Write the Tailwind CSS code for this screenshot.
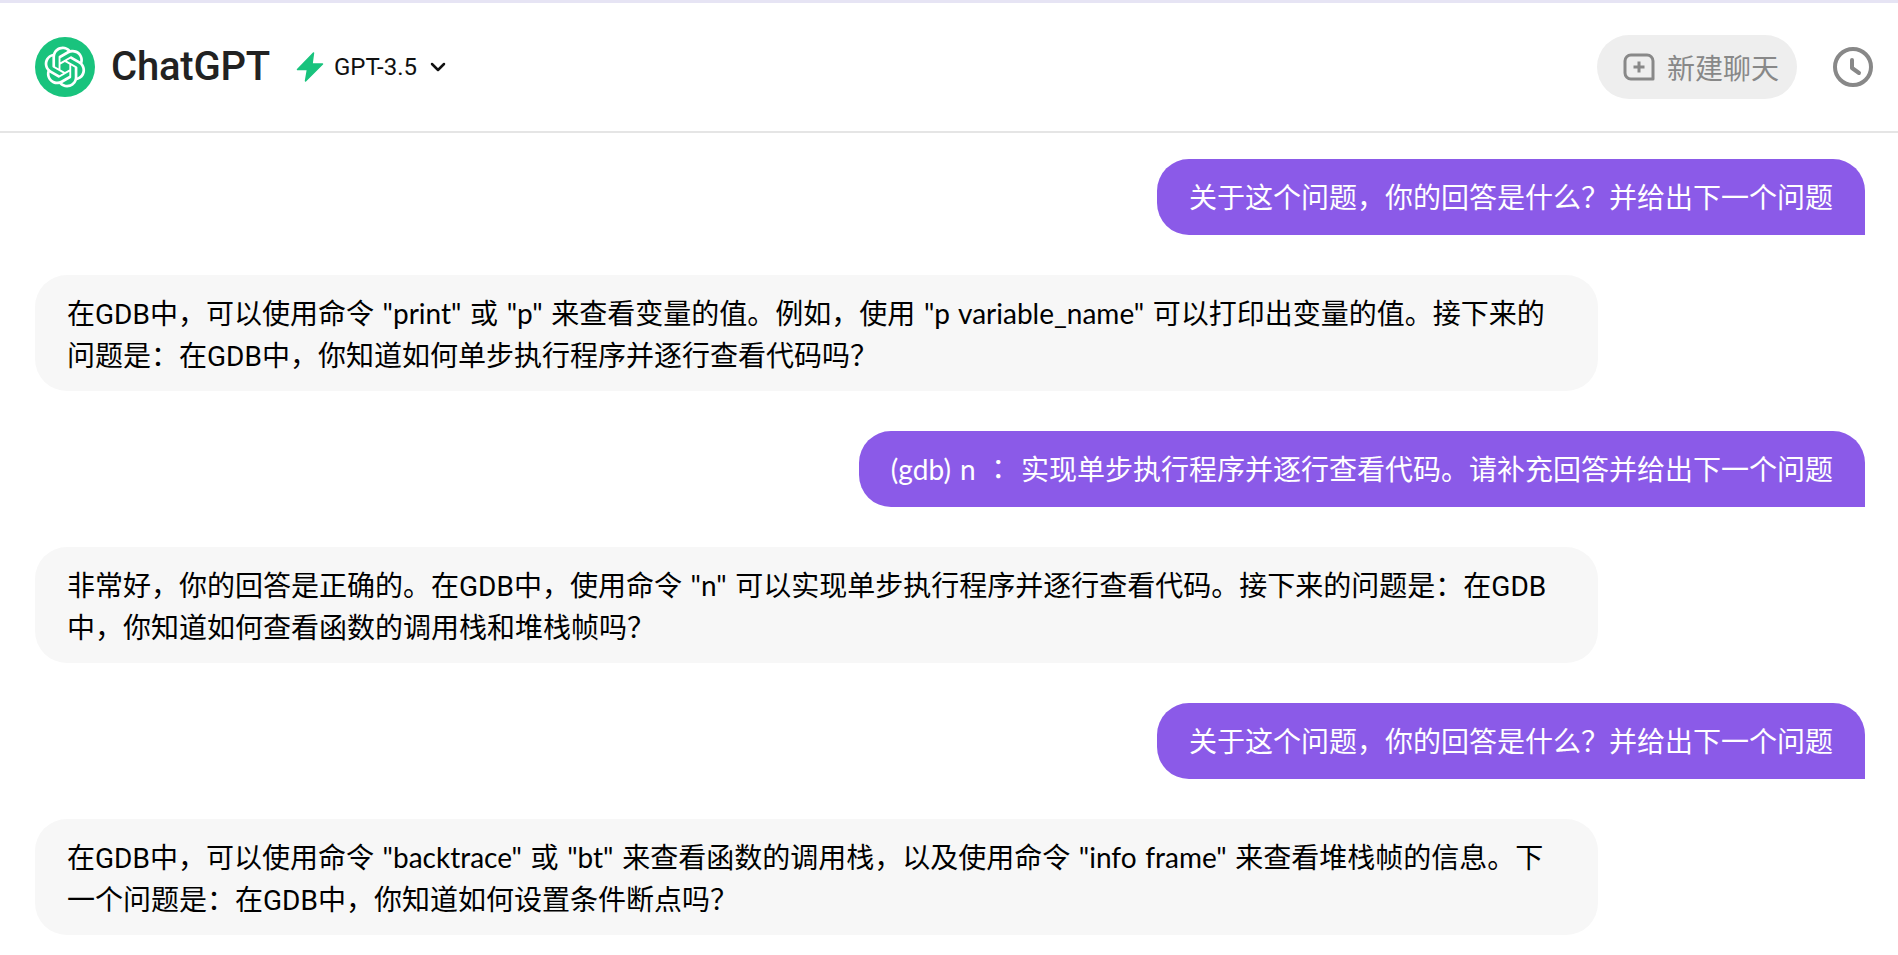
<!DOCTYPE html>
<html lang="zh-CN">
<head>
  <meta charset="UTF-8">
  <title>ChatGPT</title>
  <script src="https://cdn.jsdelivr.net/npm/@tailwindcss/browser@4"></script>
</head>
<body class="bg-white h-[955px] overflow-hidden font-['Noto_Sans_CJK_SC',sans-serif]">
  <div class="h-[3px] bg-[#e6e4f4]"></div>
  <header class="h-[130px] border-b-2 border-[#e5e5e5] flex items-center pl-[35px] pr-[25px]">
    <div class="w-[60px] h-[60px] rounded-full bg-[#19c37d] flex items-center justify-center">
      <svg class="w-[42px] h-[42px]" viewBox="0 0 41 41" fill="#fff"><path d="M37.5324 16.8707C37.9808 15.5241 38.1363 14.0974 37.9886 12.6859C37.8409 11.2744 37.3934 9.91076 36.676 8.68622C35.6126 6.83404 33.9882 5.3676 32.0373 4.4985C30.0864 3.62941 27.9098 3.40259 25.8215 3.85078C24.8796 2.7893 23.7219 1.94125 22.4257 1.36341C21.1295 0.785575 19.7249 0.491269 18.3058 0.500197C16.1708 0.495044 14.0893 1.16803 12.3614 2.42214C10.6335 3.67624 9.34853 5.44666 8.6917 7.47815C7.30085 7.76286 5.98686 8.3414 4.8377 9.17505C3.68854 10.0087 2.73073 11.0782 2.02839 12.312C0.956464 14.1591 0.498905 16.2988 0.721698 18.4228C0.944492 20.5467 1.83612 22.5449 3.268 24.1293C2.81966 25.4759 2.66413 26.9026 2.81182 28.3141C2.95951 29.7256 3.40701 31.0892 4.12437 32.3138C5.18791 34.1659 6.8123 35.6322 8.76321 36.5013C10.7141 37.3704 12.8907 37.5973 14.9789 37.1492C15.9208 38.2107 17.0786 39.0587 18.3747 39.6366C19.6709 40.2144 21.0755 40.5087 22.4946 40.4998C24.6307 40.5054 26.7133 39.8321 28.4418 38.5772C30.1704 37.3223 31.4556 35.5506 32.1119 33.5179C33.5027 33.2332 34.8167 32.6547 35.9659 31.821C37.115 30.9874 38.0728 29.9178 38.7752 28.684C39.8458 26.8371 40.3023 24.6979 40.0789 22.5748C39.8556 20.4517 38.9639 18.4544 37.5324 16.8707ZM22.4978 37.8849C20.7443 37.8874 19.0459 37.2733 17.6994 36.1501C17.7601 36.117 17.8666 36.0586 17.936 36.0161L25.9004 31.4156C26.1003 31.3019 26.2663 31.137 26.3813 30.9378C26.4964 30.7386 26.5563 30.5124 26.5549 30.2825V19.0542L29.9213 20.998C29.9389 21.0068 29.9541 21.0198 29.9656 21.0359C29.977 21.052 29.9842 21.0707 29.9867 21.0902V30.3889C29.9842 32.375 29.1946 34.2791 27.7909 35.6841C26.3872 37.0892 24.4838 37.8806 22.4978 37.8849ZM6.39227 31.0064C5.51397 29.4888 5.19742 27.7107 5.49804 25.9832C5.55718 26.0187 5.66048 26.0818 5.73461 26.1244L13.699 30.7248C13.8975 30.8408 14.1233 30.902 14.3532 30.902C14.583 30.902 14.8088 30.8408 15.0073 30.7248L24.731 25.1103V28.9979C24.7321 29.0177 24.7283 29.0376 24.7199 29.0556C24.7115 29.0736 24.6988 29.0893 24.6829 29.1012L16.6317 33.7497C14.9096 34.7416 12.8643 35.0097 10.9447 34.4954C9.02506 33.9811 7.38785 32.7263 6.39227 31.0064ZM4.29707 13.6194C5.17156 12.0998 6.55279 10.9364 8.19885 10.3327C8.19885 10.4013 8.19491 10.5228 8.19491 10.6071V19.808C8.19351 20.0378 8.25334 20.2638 8.36823 20.4629C8.48312 20.6619 8.64893 20.8267 8.84863 20.9404L18.5723 26.5542L15.206 28.4979C15.1894 28.5089 15.1703 28.5155 15.1505 28.5173C15.1307 28.5191 15.1107 28.516 15.0924 28.5082L7.04046 23.8557C5.32135 22.8601 4.06716 21.2235 3.55289 19.3046C3.03862 17.3858 3.30624 15.3413 4.29707 13.6194ZM31.955 20.0556L22.2312 14.4411L25.5976 12.4981C25.6142 12.4872 25.6333 12.4805 25.6531 12.4787C25.6729 12.4769 25.6928 12.4801 25.7111 12.4879L33.7631 17.1364C34.9967 17.849 36.0017 18.8982 36.6606 20.1613C37.3194 21.4244 37.6047 22.849 37.4832 24.2684C37.3617 25.6878 36.8382 27.0432 35.9743 28.1759C35.1103 29.3086 33.9415 30.1717 32.6047 30.6641C32.6047 30.5947 32.6047 30.4733 32.6047 30.3889V21.188C32.6066 20.9586 32.5474 20.7328 32.4332 20.5338C32.319 20.3348 32.154 20.1698 31.955 20.0556ZM35.3055 15.0128C35.2464 14.9765 35.1431 14.9142 35.069 14.8717L27.1045 10.2712C26.906 10.1554 26.6803 10.0943 26.4504 10.0943C26.2206 10.0943 25.9948 10.1554 25.7963 10.2712L16.0726 15.8858V11.9982C16.0715 11.9783 16.0753 11.9585 16.0837 11.9405C16.0921 11.9225 16.1048 11.9068 16.1207 11.8949L24.1719 7.25025C25.4053 6.53903 26.8158 6.19376 28.2383 6.25482C29.6608 6.31589 31.0364 6.78077 32.2044 7.59508C33.3723 8.40939 34.2842 9.53945 34.8334 10.8531C35.3826 12.1667 35.5464 13.6095 35.3055 15.0128ZM14.2424 21.9419L10.8752 19.9981C10.8576 19.9893 10.8423 19.9763 10.8309 19.9602C10.8195 19.9441 10.8122 19.9254 10.8098 19.9058V10.6071C10.8107 9.18295 11.2173 7.78848 11.9819 6.58696C12.7466 5.38544 13.8377 4.42659 15.1275 3.82264C16.4173 3.21869 17.8524 2.99464 19.2649 3.1767C20.6775 3.35876 22.0089 3.93941 23.1034 4.85067C23.0427 4.88379 22.937 4.94215 22.8668 4.98473L14.9024 9.58517C14.7025 9.69878 14.5366 9.86356 14.4215 10.0626C14.3065 10.2616 14.2466 10.4877 14.2479 10.7175L14.2424 21.9419ZM16.071 17.9991L20.4018 15.4978L24.7325 17.9975V22.9985L20.4018 25.4983L16.071 22.9985V17.9991Z"/></svg>
    </div>
    <span class="ml-[16px] font-['Roboto',sans-serif] font-medium text-[40px] tracking-[-0.2px] leading-none text-[#222]">ChatGPT</span>
    <svg class="ml-[26px] w-[28px] h-[30px]" viewBox="0 0 28 30" fill="#19c37d"><path d="M17.5 1 1.500 17.500h10L9.500 29 26.500 12h-10.500z" stroke="#19c37d" stroke-width="1.500" stroke-linejoin="round"/></svg>
    <span class="ml-[10px] font-['Roboto',sans-serif] text-[24px] leading-none text-[#111]">GPT-3.5</span>
    <svg class="ml-[13px] w-[16px] h-[10px]" viewBox="0 0 16 10" fill="none" stroke="#111" stroke-width="2.500" stroke-linecap="round" stroke-linejoin="round"><path d="m2 2 6 6 6-6"/></svg>
    <button class="ml-auto h-[64px] w-[200px] rounded-full bg-[#eeeeee] flex items-center pl-[26px] gap-[12px] text-[28px] text-[#888]">
      <svg class="w-[32px] h-[28px]" viewBox="0 0 32 28" fill="none" stroke="#888" stroke-width="3"><path d="M8 2h16a6 6 0 0 1 6 6v18H8a6 6 0 0 1-6-6V8a6 6 0 0 1 6-6zM16 8.500v11M10.500 14h11" stroke-linejoin="round"/></svg>
      <span>新建聊天</span>
    </button>
    <svg class="ml-[36px] w-[40px] h-[40px]" viewBox="0 0 40 40" fill="none" stroke="#888" stroke-width="4" stroke-linecap="round" stroke-linejoin="round"><circle cx="20" cy="20" r="18"/><path d="M19 13v8l7 5"/></svg>
  </header>
  <main class="pt-[26px] pr-[33px] pl-[35px] flex flex-col gap-[40px] text-[28px] leading-[42px] [word-spacing:1.5px] font-['Lato','Noto_Sans_CJK_SC',sans-serif]">
    <div class="self-end bg-[#8b5ae8] text-white rounded-t-[32px] rounded-bl-[32px] px-[32px] py-[17px]">关于这个问题，你的回答是什么？并给出下一个问题</div>
    <div class="w-[1563px] bg-[#f7f7f7] text-black rounded-[32px] px-[32px] pt-[17px] pb-[15px]">在<span class="leading-none font-['Roboto',sans-serif]">GDB</span>中，可以使用命令 "print" 或 "p" 来查看变量的值。例如，使用 "p variable_name" 可以打印出变量的值。接下来的问题是：在<span class="leading-none font-['Roboto',sans-serif]">GDB</span>中，你知道如何单步执行程序并逐行查看代码吗？</div>
    <div class="self-end bg-[#8b5ae8] text-white rounded-t-[32px] rounded-bl-[32px] px-[32px] py-[17px]"><span class="tracking-[0.1px]">(gdb) n</span> <span lang="zh-TW" class="leading-none font-['Noto_Sans_CJK_TC',sans-serif]">：</span> 实现单步执行程序并逐行查看代码。请补充回答并给出下一个问题</div>
    <div class="w-[1563px] bg-[#f7f7f7] text-black rounded-[32px] px-[32px] pt-[17px] pb-[15px]">非常好，你的回答是正确的。在<span class="leading-none font-['Roboto',sans-serif]">GDB</span>中，使用命令 "n" 可以实现单步执行程序并逐行查看代码。接下来的问题是：在<span class="leading-none font-['Roboto',sans-serif]">GDB</span>中，你知道如何查看函数的调用栈和堆栈帧吗？</div>
    <div class="self-end bg-[#8b5ae8] text-white rounded-t-[32px] rounded-bl-[32px] px-[32px] py-[17px]">关于这个问题，你的回答是什么？并给出下一个问题</div>
    <div class="w-[1563px] bg-[#f7f7f7] text-black rounded-[32px] px-[32px] pt-[17px] pb-[15px]">在<span class="leading-none font-['Roboto',sans-serif]">GDB</span>中，可以使用命令 "backtrace" 或 "bt" 来查看函数的调用栈，以及使用命令 "info frame" 来查看堆栈帧的信息。下一个问题是：在<span class="leading-none font-['Roboto',sans-serif]">GDB</span>中，你知道如何设置条件断点吗？</div>
  </main>
</body>
</html>
